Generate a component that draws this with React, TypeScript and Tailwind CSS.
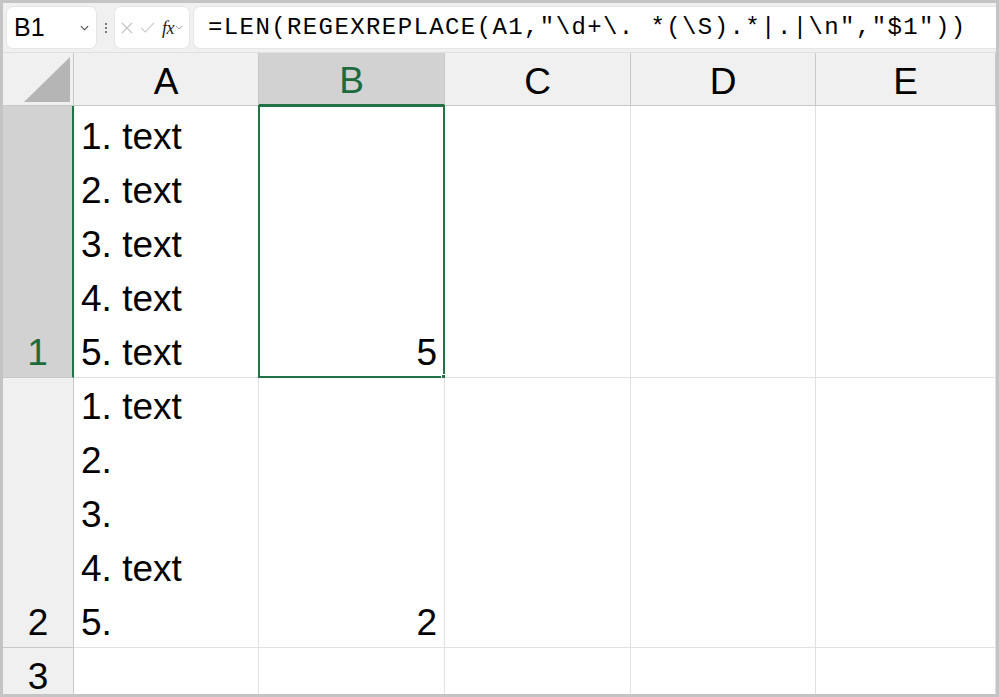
import React from 'react';

const GREEN = '#217346';

const Chevron = ({ className = '' }: { className?: string }) => (
  <svg viewBox="0 0 10 6" className={className} fill="none" stroke="currentColor" strokeWidth="1.2">
    <path d="M1 1l4 4 4-4" />
  </svg>
);

const Toolbar = () => (
  <div className="shrink-0 h-[50px] bg-[#f0f0f0] flex items-center border-b border-[#dde1e1]">
    {/* name box */}
    <div className="ml-[4px] w-[89px] h-[41px] bg-white rounded-md flex items-center pl-[7px] pr-[7px] shadow-[0_0_0_1px_#e6e6e6]">
      <span className="text-[25px] text-black leading-none font-['Liberation_Sans',sans-serif]">B1</span>
      <Chevron className="ml-auto w-[9px] h-[6px] text-[#444]" />
    </div>
    {/* vertical dots */}
    <div className="w-[19px] flex flex-col items-center gap-[2px]">
      <span className="w-[2px] h-[2px] bg-[#555] rounded-full" />
      <span className="w-[2px] h-[2px] bg-[#555] rounded-full" />
      <span className="w-[2px] h-[2px] bg-[#555] rounded-full" />
    </div>
    {/* cancel / enter / fx */}
    <div className="w-[74px] h-[41px] bg-white rounded-md flex items-center pl-[6px] shadow-[0_0_0_1px_#e6e6e6]">
      <svg viewBox="0 0 12 12" className="w-[12px] h-[12px] text-[#c4c4c4]" fill="none" stroke="currentColor" strokeWidth="1.1">
        <path d="M1 1l10 10M11 1L1 11" />
      </svg>
      <svg viewBox="0 0 16 12" className="ml-[7px] w-[15px] h-[11px] text-[#c4c4c4]" fill="none" stroke="currentColor" strokeWidth="1.1">
        <path d="M1 6.5l4.5 4.5L15 1" />
      </svg>
      <span className="ml-[7px] text-[18px] italic text-[#222] font-['Liberation_Serif',serif] leading-none tracking-[-0.5px]">fx</span>
      <Chevron className="ml-[1px] w-[8px] h-[5px] text-[#999]" />
    </div>
    {/* formula */}
    <div className="ml-[5px] flex-1 h-[41px] bg-white rounded-l-md flex items-center pl-[14px] shadow-[0_0_0_1px_#e6e6e6]">
      <span className="text-[24px] tracking-[1.4px] text-black whitespace-pre leading-none font-['Liberation_Mono',monospace]">
        =LEN(REGEXREPLACE(A1,"\d+\. *(\S).*|.|\n","$1"))
      </span>
    </div>
  </div>
);

const Lines = ({ lines }: { lines: string[] }) => (
  <div className="h-full flex flex-col justify-end">
    {lines.map((l, i) => (
      <div key={i} className="leading-[60px] h-[54px] whitespace-pre">
        {l}
      </div>
    ))}
  </div>
);

export default function App() {
  const cell = 'border-r border-b border-[#e1e1e1] bg-white relative overflow-hidden';
  const colHead = 'border-r border-b border-[#c8c8c8] bg-[#f0f0f0] flex items-center justify-center pt-[4px]';
  const rowHead = 'border-r border-b border-[#c8c8c8] bg-[#f0f0f0] flex items-end justify-center';

  return (
    <div className="w-[999px] h-[697px] border-[3px] border-[#c4c4c4] bg-white overflow-hidden flex flex-col text-black font-['Liberation_Sans',sans-serif]">
      <Toolbar />
      <div className="shrink-0 grid grid-cols-[71px_185px_186px_186px_185px_1fr] grid-rows-[53px_272px_270px_54px] text-[37px]">
        {/* header row */}
        <div className="relative border-r border-b border-[#c8c8c8] bg-[#f0f0f0]">
          <svg className="absolute right-[3px] bottom-[3px] w-[46px] h-[45px]" viewBox="0 0 46 45">
            <path d="M0 45L46 0V45Z" fill="#b5b5b5" />
          </svg>
        </div>
        <div className={colHead}>
          <span className="leading-none">A</span>
        </div>
        <div className="bg-[#d2d2d2] border-r border-[#c8c8c8] border-b-2 border-b-[#217346] flex items-center justify-center pt-[4px]">
          <span className="leading-none text-[#1d6b3c]">B</span>
        </div>
        <div className={colHead}>
          <span className="leading-none">C</span>
        </div>
        <div className={colHead}>
          <span className="leading-none">D</span>
        </div>
        <div className={colHead}>
          <span className="leading-none">E</span>
        </div>

        {/* row 1 */}
        <div className="bg-[#d2d2d2] border-b border-[#c8c8c8] border-r-2 border-r-[#217346] flex items-end justify-center">
          <span className="leading-[48px] text-[#1d6b3c]">1</span>
        </div>
        <div className={`${cell} pl-[7px]`}>
          <Lines lines={['1. text', '2. text', '3. text', '4. text', '5. text']} />
        </div>
        <div className="relative bg-white border-b border-r border-[#e1e1e1]">
          <div className="absolute -left-[1px] -top-[1px] -right-[1px] -bottom-[1px] border-2" style={{ borderColor: GREEN }} />
          <div className="h-full flex items-end justify-end pr-[7px]">
            <span className="leading-[48px]">5</span>
          </div>
          <div className="absolute -right-[4px] -bottom-[4px] w-[6px] h-[6px] bg-[#217346] ring-1 ring-white" />
        </div>
        <div className={cell} />
        <div className={cell} />
        <div className={cell} />

        {/* row 2 */}
        <div className={rowHead}>
          <span className="leading-[48px]">2</span>
        </div>
        <div className={`${cell} pl-[7px]`}>
          <Lines lines={['1. text', '2.', '3.', '4. text', '5.']} />
        </div>
        <div className={`${cell} flex items-end justify-end pr-[7px]`}>
          <span className="leading-[48px]">2</span>
        </div>
        <div className={cell} />
        <div className={cell} />
        <div className={cell} />

        {/* row 3 */}
        <div className={rowHead}>
          <span className="leading-[48px]">3</span>
        </div>
        <div className={cell} />
        <div className={cell} />
        <div className={cell} />
        <div className={cell} />
        <div className={cell} />
      </div>
    </div>
  );
}
